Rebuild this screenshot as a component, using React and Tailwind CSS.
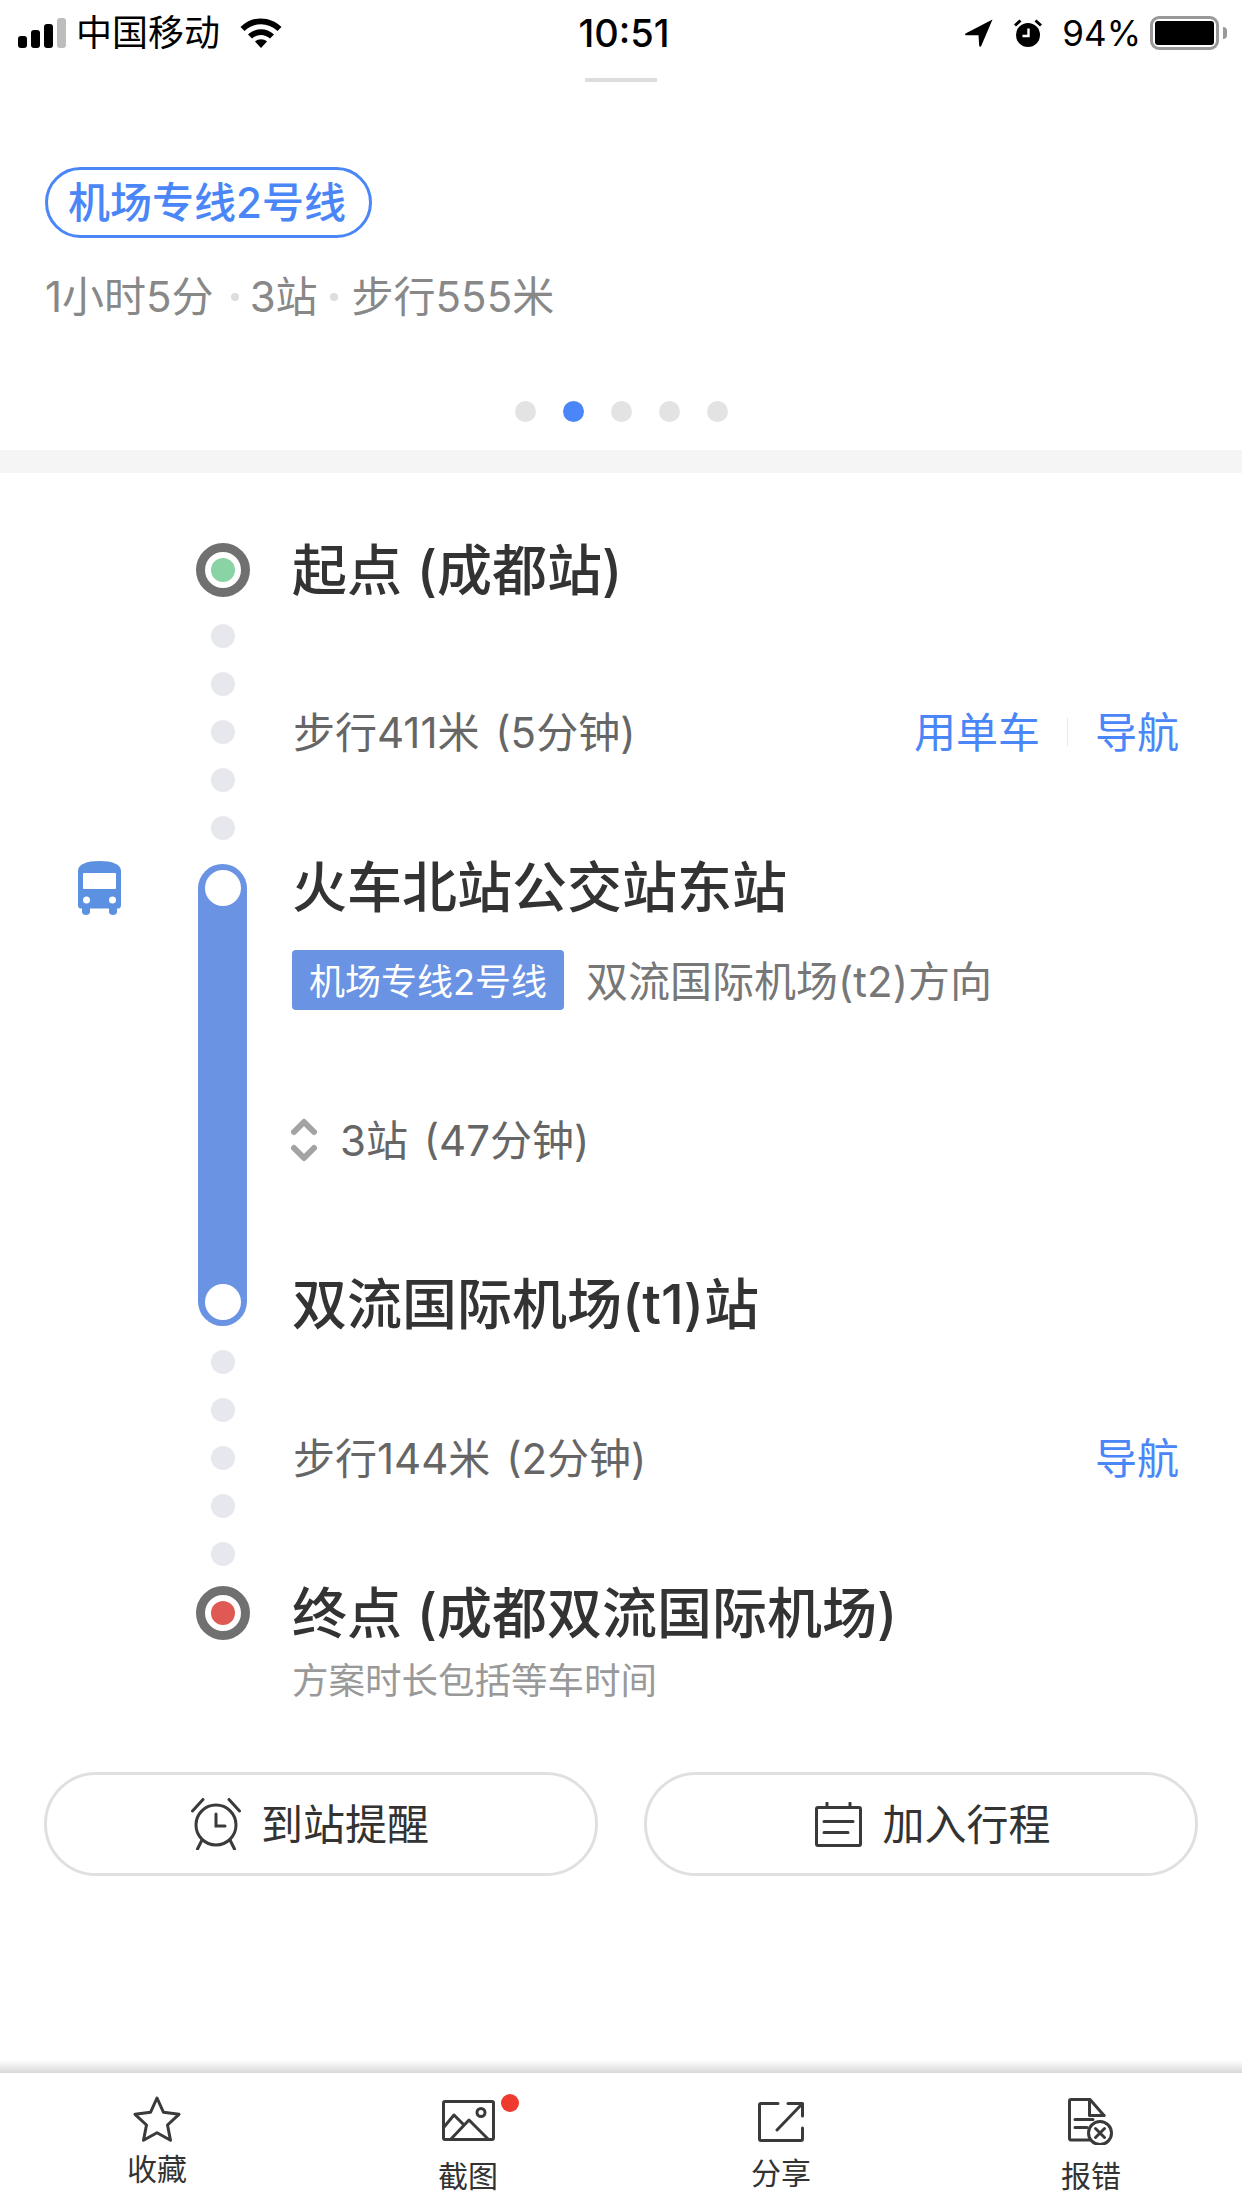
import React from "react";

const FONT = "font-['Inter','Noto_Sans_CJK_SC',sans-serif]";

const PageDots = () => (
  <div className="mt-[77px] flex justify-center gap-[27px]">
    {[0, 1, 2, 3, 4].map((i) => (
      <span key={i} className={`h-[21px] w-[21px] rounded-full ${i === 1 ? "bg-[#4a86f7]" : "bg-[#e3e3e3]"}`} />
    ))}
  </div>
);

const StatusBar = () => (
  <div className="grid h-[66px] grid-cols-[1fr_auto_1fr] items-center text-black">
    <div className="flex items-center pl-[18px]">
      <svg width="48" height="30" viewBox="0 0 48 30">
        <rect x="0" y="18" width="9" height="12" rx="3" fill="#000" />
        <rect x="13" y="12" width="9" height="18" rx="3" fill="#000" />
        <rect x="26" y="6" width="9" height="24" rx="3" fill="#000" />
        <rect x="39" y="0" width="9" height="30" rx="3" fill="#bdbdbd" />
      </svg>
      <span className="ml-[10px] text-[36px] leading-none">中国移动</span>
      <svg className="ml-[20px]" width="42" height="30" viewBox="0 0 42 30">
        <path d="M0.5 9C12 -2.5 30 -2.5 41.5 9L37.5 13C28 4 14 4 4.5 13Z" fill="#000" />
        <path d="M8 16.5C15.5 9.5 26.5 9.5 34 16.5L30 20.5C24.5 15.8 17.5 15.8 12 20.5Z" fill="#000" />
        <path d="M15 23.5C18.5 20.6 23.5 20.6 27 23.5L21 30Z" fill="#000" />
      </svg>
    </div>
    <span className="pl-[6px] text-[38px] font-medium leading-none">10:51</span>
    <div className="flex items-center justify-end pr-[15px]">
      <svg width="28" height="28" viewBox="0 0 28 28">
        <path d="M27.5 0.5L0.5 14.5C-0.3 15.2 0.2 16.3 1.2 16.3L13.5 16.3L14.2 26.8C14.4 28 15.8 28 16.2 27L27.5 0.5Z" fill="#000" />
      </svg>
      <svg className="ml-[21px]" width="28" height="28" viewBox="0 0 28 28">
        <circle cx="14" cy="16" r="12" fill="#000" />
        <path d="M14.5 9.5V17H8.5" stroke="#fff" strokeWidth="2.4" fill="none" />
        <path d="M1 6.5L6.5 1.5M27 6.5L21.5 1.5" stroke="#000" strokeWidth="3" />
      </svg>
      <span className="ml-[20px] text-[35px] leading-none">94%</span>
      <div className="ml-[9px] flex items-center">
        <div className="flex h-[34px] w-[69px] items-center rounded-[9px] border-[3px] border-[#999999] p-[2px]">
          <div className="h-full w-full rounded-[3px] bg-black" />
        </div>
        <span className="ml-[4px] h-[12px] w-[4px] rounded-r-full bg-[#999999]" />
      </div>
    </div>
  </div>
);

const Marker = ({ color }) => (
  <div className="flex h-[54px] w-[54px] shrink-0 items-center justify-center rounded-full border-[9px] border-[#707070] bg-white">
    <span className={`h-[24px] w-[24px] rounded-full ${color}`} />
  </div>
);

const RailDots = () => (
  <div className="flex w-[48px] flex-col items-center gap-[24px]">
    {[0, 1, 2, 3, 4].map((i) => (
      <span key={i} className="h-[24px] w-[24px] rounded-full bg-[#e7e8ee]" />
    ))}
  </div>
);

const Walk = ({ text, className, children }) => (
  <div className={`flex h-[216px] pl-[199px] ${className}`}>
    <RailDots />
    <div className="ml-[46px] flex flex-1 items-center justify-between pr-[63px] text-[42px] text-[#666666]">
      <span className="[word-spacing:4px]">{text}</span>
      {children}
    </div>
  </div>
);

const BusIcon = () => (
  <svg width="43" height="54" viewBox="0 0 43 54">
    <path
      d="M0 10C0 3 9 0 21.5 0S43 3 43 10V44C43 46 42 47.500 40.500 47.500H39V51C39 55 31 55 31 51V47.500H12V51C12 55 4 55 4 51V47.500H2.500C1 47.500 0 46 0 44Z"
      fill="#5c90e0"
    />
    <rect x="5" y="12" width="33" height="16" rx="1" fill="#fff" />
    <circle cx="8.500" cy="39" r="3.500" fill="#fff" />
    <circle cx="34.500" cy="39" r="3.500" fill="#fff" />
  </svg>
);

const Transit = () => (
  <div className="mt-[24px] flex h-[462px]">
    <div className="w-[198px] pl-[78px]">
      <div className="-mt-[3px]">
        <BusIcon />
      </div>
    </div>
    <div className="flex w-[49px] flex-col items-center justify-between rounded-full bg-[#6a93e3] py-[6px]">
      <span className="h-[36px] w-[36px] rounded-full bg-white" />
      <span className="h-[36px] w-[36px] rounded-full bg-white" />
    </div>
    <div className="ml-[45px] flex flex-col">
      <p className="h-[48px] text-[55px] font-medium leading-[46px] text-[#333333]">火车北站公交站东站</p>
      <div className="mt-[37px] flex items-center">
        <span className="flex h-[60px] w-[272px] items-center justify-center rounded-[4px] bg-[#6a93e3] pt-[3px] text-[36px] text-white">
          机场专线2号线
        </span>
        <span className="ml-[22px] mt-[3px] text-[42px] text-[#777777]">双流国际机场(t2)方向</span>
      </div>
      <div className="mt-[97px] flex h-[60px] items-center text-[42px] text-[#666666]">
        <svg className="-ml-[1px]" width="26" height="44" viewBox="0 0 26 44" fill="none" stroke="#a3a3a3" strokeWidth="6" strokeLinecap="round" strokeLinejoin="round">
          <path d="M3 14L13 4L23 14" />
          <path d="M3 30L13 40L23 30" />
        </svg>
        <span className="ml-[23px] [word-spacing:4px]">3站 (47分钟)</span>
      </div>
      <p className="mt-[110px] h-[48px] text-[55px] font-medium leading-[48px] text-[#333333]">双流国际机场(t1)站</p>
    </div>
  </div>
);

const AlarmIcon = () => (
  <svg width="50" height="52" viewBox="0 0 50 52" fill="none" stroke="#3a3a3a" strokeWidth="3" strokeLinecap="round">
    <circle cx="25" cy="27" r="20" />
    <path d="M25 16V28H34" />
    <path d="M1.500 13L12 1.500" />
    <path d="M48.500 13L38 1.500" />
    <path d="M11 42L6.500 51" />
    <path d="M39 42L43.500 51" />
  </svg>
);

const PlanIcon = () => (
  <svg width="47" height="45" viewBox="0 0 47 45" fill="none" stroke="#3a3a3a" strokeWidth="3" strokeLinecap="round" strokeLinejoin="round">
    <rect x="1.500" y="5.500" width="44" height="38" rx="1.500" />
    <path d="M12 1V5M35 1V5" />
    <path d="M9 19.500H38M9 30.500H33" />
  </svg>
);

const ActionButton = ({ icon, label, className }) => (
  <div className={`flex h-[104px] w-[554px] items-center justify-center gap-[20px] rounded-full border-[3px] border-[#e0e0e0] text-[42px] text-[#333333] ${className}`}>
    {icon}
    <span>{label}</span>
  </div>
);

const StarIcon = () => (
  <svg width="48" height="46" viewBox="0 0 48 46" fill="none" stroke="#3a3a3a" strokeWidth="3" strokeLinejoin="round">
    <path d="M24 2L30.500 16.300L46 18.300L34.500 29L37.500 44.300L24 36.800L10.500 44.300L13.500 29L2 18.300L17.500 16.300Z" />
  </svg>
);

const PictureIcon = () => (
  <svg width="53" height="41" viewBox="0 0 53 41" fill="none" stroke="#3a3a3a" strokeWidth="3" strokeLinejoin="round">
    <rect x="1.500" y="1.500" width="50" height="38" rx="1.500" />
    <path d="M2 27L12 15L22 25" />
    <path d="M9 39L27 20L46 39" />
    <circle cx="39" cy="12.500" r="4" />
  </svg>
);

const ShareIcon = () => (
  <svg width="46" height="40" viewBox="0 0 46 40" fill="none" stroke="#3a3a3a" strokeWidth="3" strokeLinecap="round" strokeLinejoin="round">
    <path d="M20 1.500H3C2 1.500 1.500 2 1.500 3V37C1.500 38 2 38.500 3 38.500H43C44 38.500 44.500 38 44.500 37V26" />
    <path d="M30 1.500H44.500V14" />
    <path d="M44 2L19 28" />
  </svg>
);

const ReportIcon = () => (
  <svg width="46" height="47" viewBox="0 0 46 47" fill="none" stroke="#3a3a3a" strokeWidth="3" strokeLinecap="round" strokeLinejoin="round">
    <path d="M22 42H3C2 42 1.500 41.500 1.500 40V3C1.500 2 2 1.500 3 1.500H22L36 17.500" />
    <path d="M21.500 2V17.500H36" />
    <path d="M7 21.500H25M7 29.500H19" />
    <circle cx="32" cy="35" r="11.500" fill="#fff" />
    <path d="M27.500 30.500L36.500 39.500M36.500 30.500L27.500 39.500" />
  </svg>
);

const TAB_ITEMS = [
  { label: "收藏", icon: <StarIcon />, top: "pt-[23px]", gap: "mt-[10px]" },
  { label: "截图", icon: <PictureIcon />, top: "pt-[27px]", gap: "mt-[18px]", badge: true },
  { label: "分享", icon: <ShareIcon />, top: "pt-[29px]", gap: "mt-[14px]" },
  { label: "报错", icon: <ReportIcon />, top: "pt-[25px]", gap: "mt-[14px]" },
];

const TabBar = () => (
  <div className="mt-auto">
    <div className="h-[13px] bg-gradient-to-b from-white to-[#d8d8d8]" />
    <div className="grid h-[135px] grid-cols-[314px_308px_318px_302px] bg-white">
      {TAB_ITEMS.map((item) => (
        <div key={item.label} className={`relative flex flex-col items-center text-[30px] leading-[34px] text-[#333333] ${item.top}`}>
          {item.icon}
          {item.badge && <span className="absolute left-[187px] top-[21px] h-[18px] w-[18px] rounded-full bg-[#ee3a2f]" />}
          <span className={item.gap}>{item.label}</span>
        </div>
      ))}
    </div>
  </div>
);

export default function App() {
  return (
    <div className={`flex h-[2208px] w-[1242px] flex-col overflow-hidden bg-white ${FONT}`}>
      <StatusBar />
      <div className="mx-auto mt-[12px] h-[4px] w-[72px] bg-[#dddddd]" />

      {/* route summary */}
      <div className="h-[368px] px-[45px] pt-[85px]">
        <span className="inline-flex h-[71px] w-[327px] items-center justify-center rounded-full border-[3px] border-[#4a86f7] pr-[3px] text-[42px] font-medium text-[#4a86f7]">
          机场专线2号线
        </span>
        <div className="mt-[32px] flex items-center text-[42px] leading-[54px] text-[#888888]">
          <span>1小时5分</span>
          <span className="ml-[17px] mr-[11px] h-[8px] w-[8px] rounded-full bg-[#dddddd]" />
          <span>3站</span>
          <span className="ml-[12px] mr-[14px] h-[8px] w-[8px] rounded-full bg-[#dddddd]" />
          <span>步行555米</span>
        </div>
        <PageDots />
      </div>
      <div className="h-[23px] bg-[#f5f5f5]" />

      {/* route steps */}
      <div className="mt-[70px] flex h-[54px] items-center pl-[196px]">
        <Marker color="bg-[#8ad3a5]" />
        <p className="ml-[42px] text-[55px] font-medium text-[#333333]">起点 (成都站)</p>
      </div>
      <Walk text="步行411米 (5分钟)" className="mt-[27px]">
        <div className="flex items-center text-[#4a86f7]">
          <span>用单车</span>
          <span className="mx-[27px] h-[28px] w-[1px] bg-[#e8e8e8]" />
          <span>导航</span>
        </div>
      </Walk>
      <Transit />
      <Walk text="步行144米 (2分钟)" className="mt-[24px]">
        <span className="text-[#4a86f7]">导航</span>
      </Walk>
      <div className="mt-[20px] flex h-[54px] items-center pl-[196px]">
        <Marker color="bg-[#e05a55]" />
        <p className="ml-[42px] text-[55px] font-medium text-[#333333]">终点 (成都双流国际机场)</p>
      </div>
      <p className="mt-[15px] h-[50px] pl-[292px] text-[36.5px] leading-[52px] text-[#999999]">方案时长包括等车时间</p>

      <div className="mt-[67px] flex justify-between pl-[44px] pr-[44px]">
        <ActionButton icon={<AlarmIcon />} label="到站提醒" className="pr-[22px]" />
        <ActionButton icon={<PlanIcon />} label="加入行程" className="pl-[24px]" />
      </div>

      <TabBar />
    </div>
  );
}
